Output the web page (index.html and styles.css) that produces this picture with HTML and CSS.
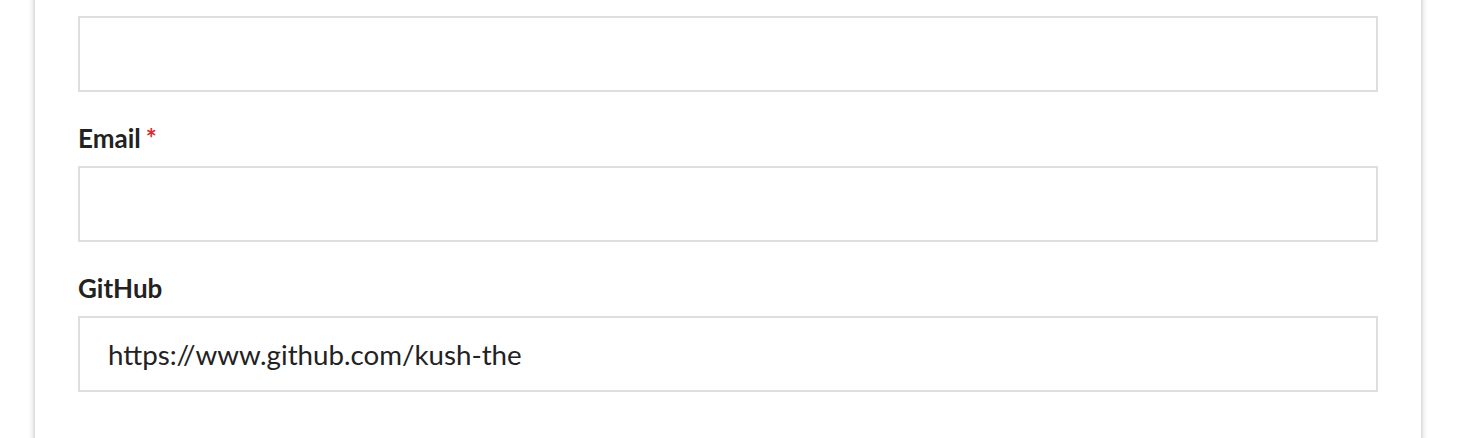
FILE: index.html
```html
<!DOCTYPE html>
<html>
<head>
<meta charset="utf-8">
<link rel="stylesheet" href="styles.css">
</head>
<body>
<div class="page">
  <form class="card">
    <div class="field">
      <input class="input" type="text" value="">
    </div>
    <div class="field">
      <label class="label">Email<span class="req">*</span></label>
      <input class="input" type="text" value="">
    </div>
    <div class="field">
      <label class="label">GitHub</label>
      <input class="input" type="text" value="https://www.github.com/kush-the">
    </div>
  </form>
</div>
</body>
</html>
```
FILE: styles.css
```css
html, body {
  margin: 0;
  padding: 0;
  background: #ffffff;
  overflow: hidden;
}
body {
  font-family: Lato, "Open Sans", sans-serif;
  color: #222222;
}
.page {
  padding-left: 35px;
  height: 438px;
  overflow: hidden;
}
.card {
  width: 1386px;
  box-sizing: border-box;
  margin-top: -40px;
  padding: 56px 43px 80px 43px;
  background: #fff;
  box-shadow: 0 0 6px rgba(0, 0, 0, 0.3);
  display: flex;
  flex-direction: column;
  gap: 32px;
}
.field {
  display: flex;
  flex-direction: column;
  gap: 13px;
}
.label {
  font-weight: 700;
  font-size: 26px;
  line-height: 29px;
  color: #222222;
}
.req {
  color: #d32f2f;
  margin-left: 5px;
}
.input {
  box-sizing: border-box;
  width: 1300px;
  height: 76px;
  border: 2px solid #dedede;
  border-radius: 0;
  padding: 0 28px;
  font-family: Lato, "Open Sans", sans-serif;
  font-size: 27.7px;
  color: #222222;
  background: #fff;
  outline: none;
  margin: 0;
}
```
